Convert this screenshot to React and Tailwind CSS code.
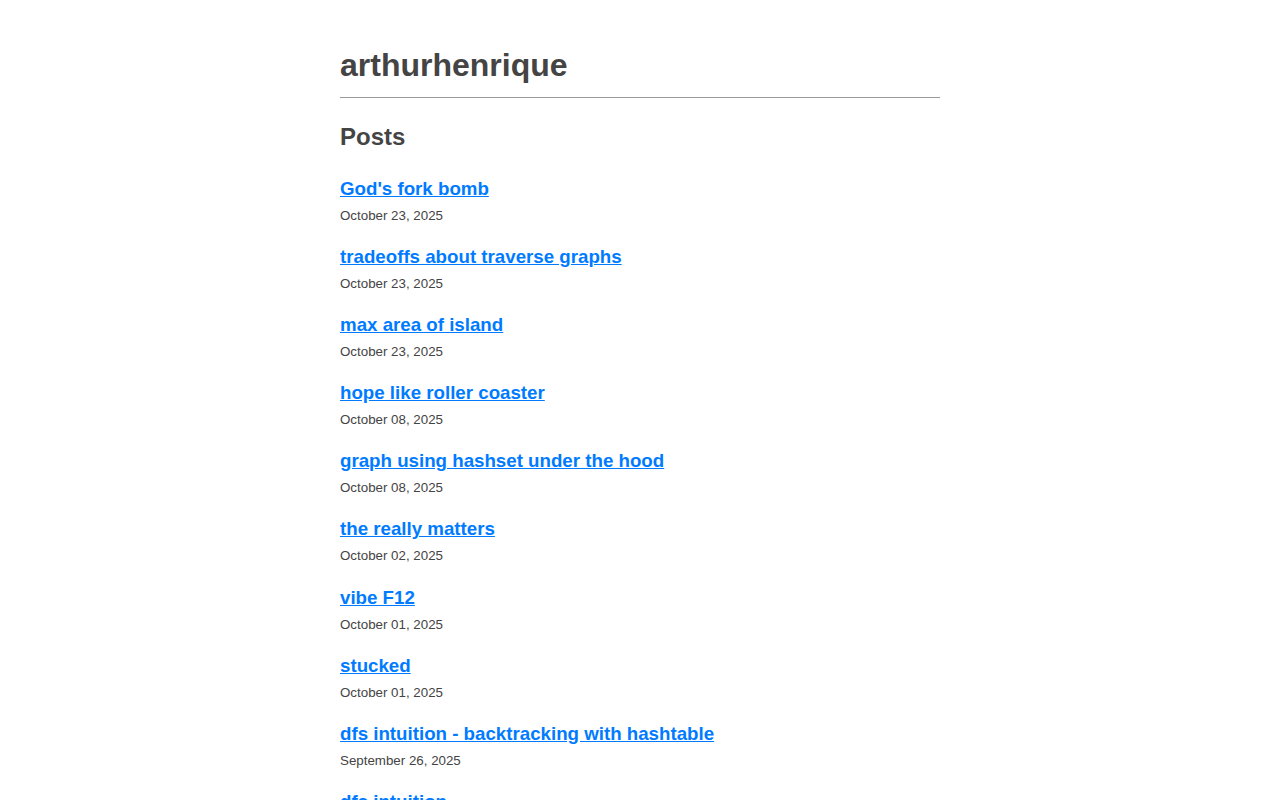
const posts = [
  { title: "God's fork bomb", date: "October 23, 2025" },
  { title: "tradeoffs about traverse graphs", date: "October 23, 2025" },
  { title: "max area of island", date: "October 23, 2025" },
  { title: "hope like roller coaster", date: "October 08, 2025" },
  { title: "graph using hashset under the hood", date: "October 08, 2025" },
  { title: "the really matters", date: "October 02, 2025" },
  { title: "vibe F12", date: "October 01, 2025" },
  { title: "stucked", date: "October 01, 2025" },
  { title: "dfs intuition - backtracking with hashtable", date: "September 26, 2025" },
  { title: "dfs intuition", date: "September 25, 2025" },
];

export default function App() {
  return (
    <main className="min-h-screen bg-white text-[#444] font-['Liberation_Sans',Arial,sans-serif]">
      <div className="mx-auto w-[600px] pt-[44px]">
        {/* Header */}
        <header className="border-b border-[#999] pb-[11px]">
          <h1 className="text-[32px] font-bold leading-[42px]">arthurhenrique</h1>
        </header>

        {/* Posts */}
        <h2 className="mt-[24px] text-[24px] font-bold leading-[30px]">Posts</h2>

        <ul className="mt-[25px]">
          {posts.map((post) => (
            <li key={post.title} className="mb-[20.1px]">
              <h3 className="text-[18.72px] font-bold leading-[24px]">
                <a href="#" className="text-[#007bff] underline">
                  {post.title}
                </a>
              </h3>
              <div className="mt-[6px] text-[13.33px] leading-[18px]">{post.date}</div>
            </li>
          ))}
        </ul>
      </div>
    </main>
  );
}
